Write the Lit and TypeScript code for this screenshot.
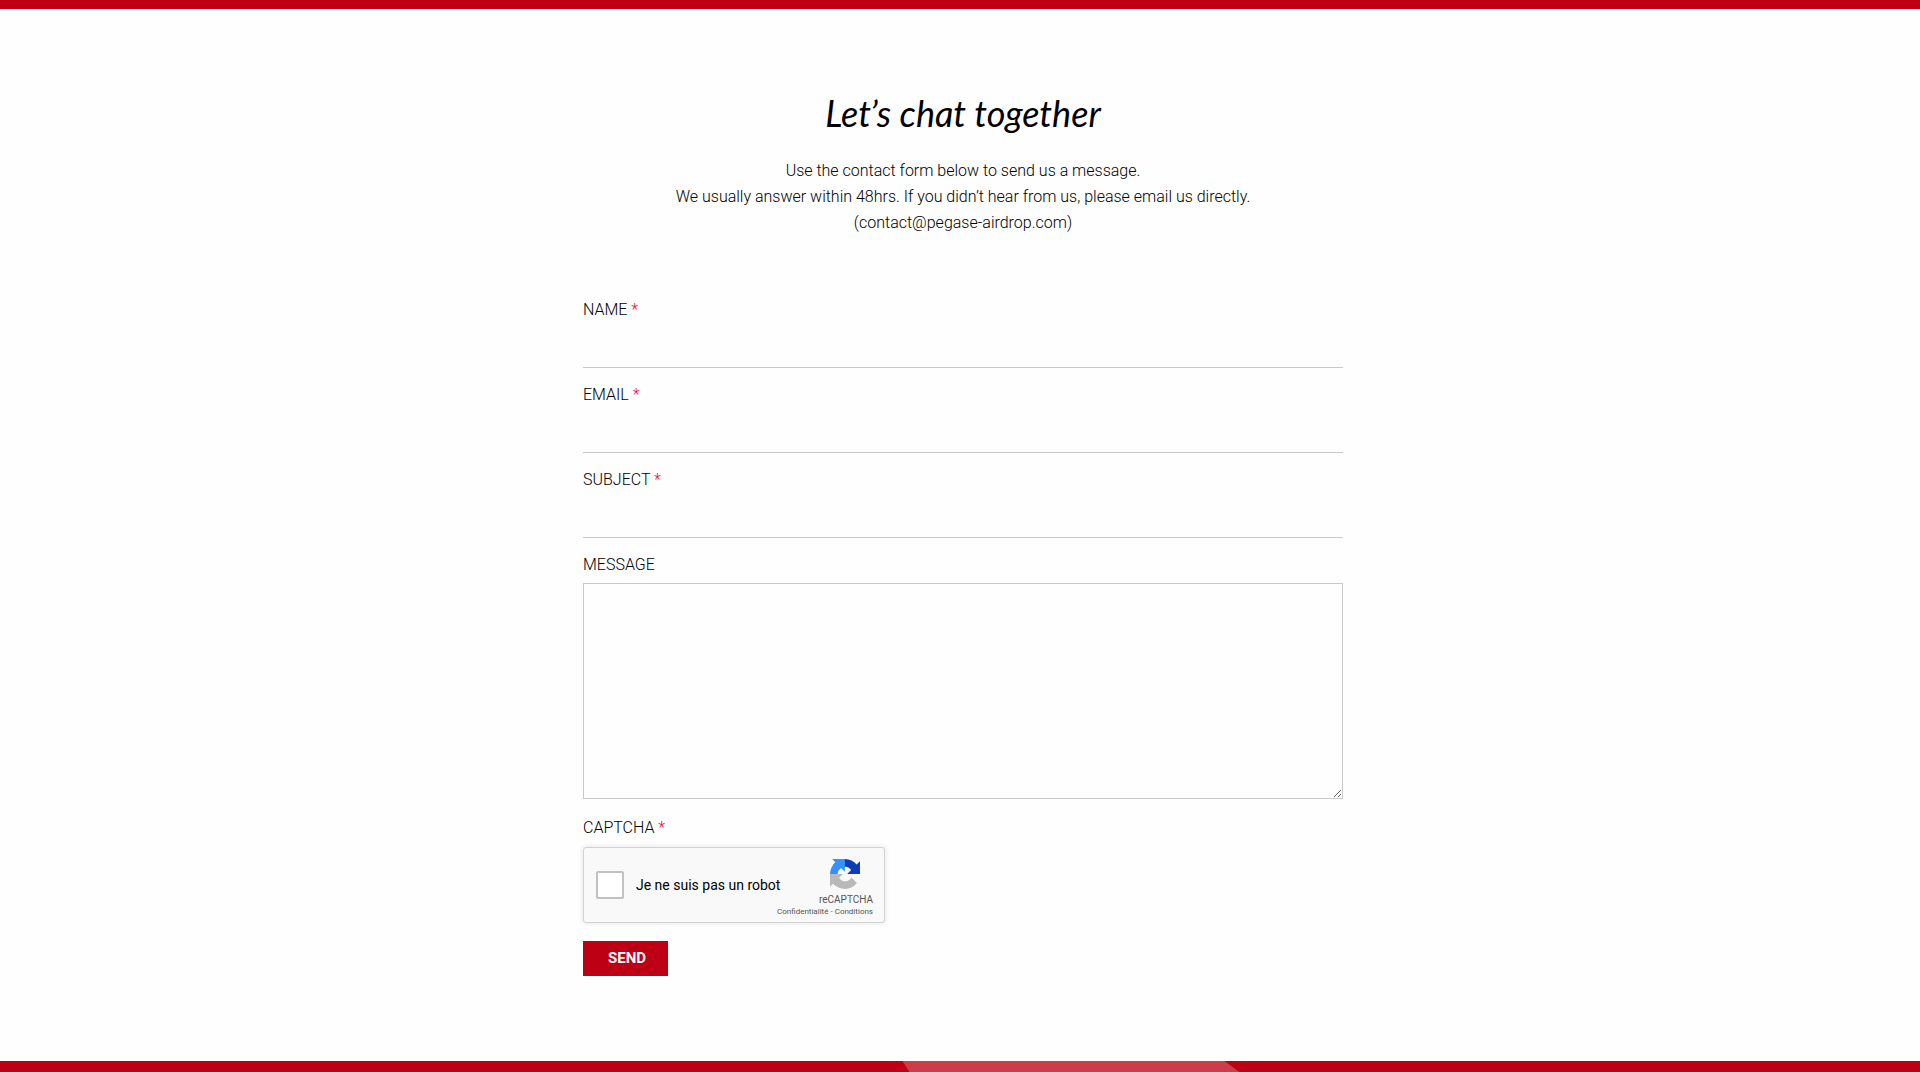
import { LitElement, html, css } from "lit";
import { customElement, property } from "lit/decorators.js";

interface Field {
  id: string;
  label: string;
  type: string;
}

const FIELDS: Field[] = [
  { id: "name", label: "NAME", type: "text" },
  { id: "email", label: "EMAIL", type: "email" },
  { id: "subject", label: "SUBJECT", type: "text" },
];

@customElement("captcha-box")
class CaptchaBox extends LitElement {
  @property() labelText = "";

  static styles = css`
    :host {
      display: block;
    }
    .box {
      box-sizing: border-box;
      display: flex;
      justify-content: space-between;
      width: 302px;
      max-width: 100%;
      height: 76px;
      padding: 0 11px 0 12px;
      border: 1px solid #d3d3d3;
      border-radius: 3px;
      background: #f9f9f9;
      box-shadow: 0 0 4px 1px rgba(0, 0, 0, 0.08);
      font-family: Roboto, "Liberation Sans", sans-serif;
      font-weight: 400;
    }
    .check {
      display: flex;
      align-items: center;
      gap: 12px;
      font-size: 14px;
      line-height: 17px;
      color: #000;
      white-space: nowrap;
    }
    .tick {
      appearance: none;
      box-sizing: border-box;
      flex: none;
      width: 28px;
      height: 28px;
      margin: 0;
      border: 2px solid #c1c1c1;
      border-radius: 2px;
      background: #fff;
    }
    .brand {
      display: flex;
      flex-direction: column;
      align-items: flex-end;
      width: 0;
      padding-top: 11px;
      color: #555;
      white-space: nowrap;
    }
    .logo {
      flex: none;
      width: 30px;
      height: 30px;
      margin-right: 13px;
    }
    .name {
      margin-top: 4px;
      font-size: 10px;
      line-height: 14px;
    }
    .links {
      font-size: 8px;
      line-height: 10px;
    }
    .links a {
      color: inherit;
      text-decoration: none;
    }
  `;

  render() {
    return html`
      <div class="box">
        <label class="check">
          <input class="tick" type="checkbox" />
          <span>${this.labelText}</span>
        </label>
        <div class="brand">
          <svg class="logo" viewBox="0 0 64 64" aria-hidden="true">
            <path fill="#0f3db5" d="M64 31.955l-.033-1.37V4.687l-7.16 7.16C50.948 4.674 42.033.093 32.05.093c-10.4 0-19.622 4.96-25.458 12.64l11.736 11.86a15.55 15.55 0 0 1 4.754-5.334c2.05-1.6 4.952-2.906 8.968-2.906.485 0 .86.057 1.135.163 4.976.393 9.288 3.14 11.828 7.124l-8.307 8.307L64 31.953" />
            <path fill="#3392ff" d="M31.862.094l-1.37.033H4.594l7.16 7.16C4.58 13.147 0 22.06 0 32.046c0 10.4 4.96 19.622 12.64 25.458L24.5 45.768a15.55 15.55 0 0 1-5.334-4.754c-1.6-2.05-2.906-4.952-2.906-8.968 0-.485.057-.86.163-1.135.393-4.976 3.14-9.288 7.124-11.828l8.307 8.307L31.86.095" />
            <path fill="#b9b9b9" d="M.001 32.045l.033 1.37v25.898l7.16-7.16c5.86 7.173 14.774 11.754 24.76 11.754 10.4 0 19.622-4.96 25.458-12.64l-11.736-11.86a15.55 15.55 0 0 1-4.754 5.334c-2.05 1.6-4.952 2.906-8.968 2.906-.485 0-.86-.057-1.135-.163-4.976-.393-9.288-3.14-11.828-7.124l8.307-8.307L0 32.047" />
          </svg>
          <span class="name">reCAPTCHA</span>
          <span class="links"><a href="#privacy">Confidentialité</a> - <a href="#terms">Conditions</a></span>
        </div>
      </div>
    `;
  }
}

@customElement("app-root")
class AppRoot extends LitElement {
  static styles = css`
    :host {
      display: flex;
      flex-direction: column;
      min-height: 100vh;
      background: #fefefe;
      color: #000;
      font-family: Roboto, "Liberation Sans", sans-serif;
      font-size: 16px;
      font-weight: 300;
      line-height: 26px;
    }
    .top {
      height: 9px;
      background: #be0014;
    }
    .content {
      flex: 1;
      box-sizing: content-box;
      width: 100%;
      max-width: 760px;
      margin: 0 auto;
      padding: 80px 0 0 6px;
    }
    .title {
      margin: 0;
      font-family: Lato, sans-serif;
      font-size: 36px;
      font-style: italic;
      font-weight: 400;
      line-height: 48px;
      text-align: center;
    }
    .intro {
      margin: 21px 0 61px;
      text-align: center;
    }
    .form {
      display: flex;
      flex-direction: column;
      align-items: stretch;
    }
    .field {
      display: flex;
      flex-direction: column;
      margin-bottom: 14px;
    }
    .label {
      line-height: 26px;
    }
    .required {
      color: #ff0033;
    }
    .input,
    .area {
      box-sizing: border-box;
      width: 100%;
      margin: 0;
      border: 1px solid #cacaca;
      border-radius: 0;
      background: transparent;
      color: inherit;
      font: inherit;
      outline: none;
    }
    .input {
      height: 45px;
      padding: 0 8px;
      border-width: 0 0 1px;
    }
    .area {
      display: block;
      height: 216px;
      margin-top: 5px;
      padding: 8px;
      resize: vertical;
    }
    .verify {
      margin: 2px 0 18px;
    }
    .captcha {
      margin-top: 6px;
    }
    .send {
      align-self: flex-start;
      height: 35px;
      padding: 0 22px 0 25px;
      border: 0;
      background: #be0014;
      color: #fff;
      font-family: inherit;
      font-size: 15px;
      font-weight: 700;
      line-height: 35px;
    }
    .bottom {
      display: flex;
      height: 11px;
      background: #be0014;
    }
    .ribbon {
      width: 337px;
      margin-left: 47%;
      background: #cb3d48;
      clip-path: polygon(0 0, 322px 0, 100% 100%, 7px 100%);
    }
  `;

  private renderField(field: Field) {
    return html`
      <div class="field">
        <label class="label" for=${field.id}>${field.label} <span class="required">*</span></label>
        <input class="input" id=${field.id} name=${field.id} type=${field.type} required />
      </div>
    `;
  }

  render() {
    return html`
      <header class="top"></header>
      <main class="content">
        <h1 class="title">Let’s chat together</h1>
        <p class="intro">
          Use the contact form below to send us a message.<br />
          We usually answer within 48hrs. If you didn’t hear from us, please email us directly.<br />
          (contact@pegase-airdrop.com)
        </p>
        <form class="form">
          ${FIELDS.map((field) => this.renderField(field))}
          <div class="field">
            <label class="label" for="message">MESSAGE</label>
            <textarea class="area" id="message" name="message"></textarea>
          </div>
          <div class="verify">
            <div class="label">CAPTCHA <span class="required">*</span></div>
            <captcha-box class="captcha" .labelText=${"Je ne suis pas un robot"}></captcha-box>
          </div>
          <button class="send" type="button">SEND</button>
        </form>
      </main>
      <footer class="bottom"><div class="ribbon"></div></footer>
    `;
  }
}
